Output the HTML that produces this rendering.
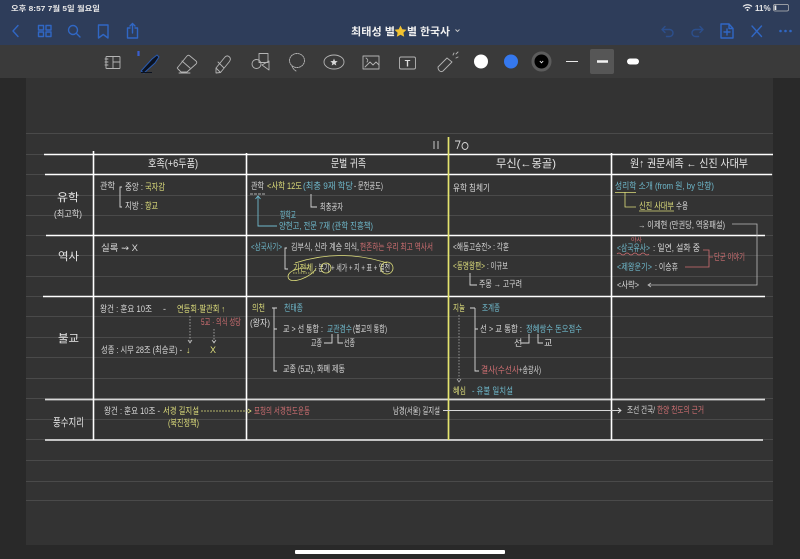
<!DOCTYPE html>
<html lang="ko"><head><meta charset="utf-8"><title>최태성 별 한국사</title>
<style>
html,body{margin:0;padding:0;background:#292929;width:800px;height:559px;overflow:hidden}
svg{display:block}
text{font-family:"Liberation Sans","Noto Sans CJK KR",sans-serif}
.t{filter:blur(.3px)}
.t text{font-size:9px}
.w{fill:#d8d8d8}.y{fill:#dede7c}.c{fill:#6fb9cc}.r{fill:#cf6f72}
.h{font-size:11px!important;fill:#e8e8e8}
.ln{stroke:#fff;stroke-width:1.6}
.rule{stroke:#4a4a4a;stroke-width:1}
.b{fill:none;stroke:#d8d8d8;stroke-width:.9}
.ic{fill:none;stroke:#3067c4;stroke-width:1.4;stroke-linecap:round;stroke-linejoin:round}
.id{fill:none;stroke:#2c4f8c;stroke-width:1.4;stroke-linecap:round;stroke-linejoin:round}
.tb{fill:none;stroke:#b4b4b4;stroke-width:.9;stroke-linejoin:round;stroke-linecap:round}
</style></head><body>
<svg width="800" height="559" viewBox="0 0 800 559" xmlns="http://www.w3.org/2000/svg">
<rect width="800" height="559" fill="#292929"/>
<!-- page -->
<rect x="26" y="78" width="747" height="467" fill="#333333"/>
<g class="rule">
<path d="M26 133.500H773M26 174.500H773M26 195.500H773M26 215.500H773M26 235.500H773M26 255.500H773M26 276.500H773M26 296.500H773M26 316.500H773M26 337.500H773M26 357.500H773M26 378.500H773M26 398.500H773M26 419.500H773M26 439.500H773M26 460.500H773M26 481.500H773M26 500.500H773M26 154.500H773"/>
</g>
<!-- nav bar -->
<rect width="800" height="45" fill="#2e3d5a"/>
<rect y="45" width="800" height="33" fill="#3a3a3a"/>
<text x="11" y="11" font-size="7.500" font-weight="700" fill="#e8e8e8" textLength="89" lengthAdjust="spacingAndGlyphs">오후 8:57  7월 5일 월요일</text>
<text x="755" y="11" font-size="8" font-weight="700" fill="#e8e8e8">11%</text>
<path d="M743 6.500q4.500-3.500 9 0M744.800 8.300q2.700-2 5.400 0" fill="none" stroke="#eee" stroke-width="1.100"/><circle cx="747.500" cy="10" r="1" fill="#eee"/>
<rect x="773.500" y="4.500" width="15" height="6.500" rx="1.500" fill="none" stroke="#bbb" stroke-width=".7"/><rect x="774.500" y="5.500" width="1.800" height="4.500" fill="#eee"/>
<!-- nav left icons -->
<path class="ic" d="M18 25.500l-5 5.500 5 5.500" stroke-width="1.800"/>
<g class="ic"><rect x="38.500" y="25.500" width="5" height="4.500"/><rect x="46" y="25.500" width="5" height="4.500"/><rect x="38.500" y="32" width="5" height="4.500"/><rect x="46" y="32" width="5" height="4.500"/></g>
<circle class="ic" cx="73" cy="30" r="4.500"/><path class="ic" d="M76.500 33.500l3.500 3.500"/>
<path class="ic" d="M98.500 25h9.500v13l-4.750-3.500-4.750 3.500z"/>
<path class="ic" d="M130 28h-2.500v10h10v-10h-2.500M132.500 33v-9.500M130 26l2.500-2.500 2.500 2.500"/>
<!-- title -->
<text x="351" y="35" font-size="10.500" font-weight="700" fill="#f0f0f0" textLength="44" lengthAdjust="spacingAndGlyphs">최태성 별</text>
<polygon points="400.500,25.500 402.300,29.300 406.500,29.800 403.400,32.700 404.200,36.800 400.500,34.800 396.800,36.800 397.600,32.700 394.500,29.800 398.700,29.300" fill="#f2c230"/>
<text x="407" y="35" font-size="10.500" font-weight="700" fill="#f0f0f0" textLength="43" lengthAdjust="spacingAndGlyphs">별 한국사</text>
<path d="M455.500 29.500l2 2 2-2" fill="none" stroke="#ccc" stroke-width=".9"/>
<!-- nav right icons -->
<path class="id" d="M665 26.500l-3 3 3 3M662 29.500h7.500a3.300 3.300 0 0 1 0 7h-3"/>
<path class="id" d="M700 26.500l3 3-3 3M703 29.500h-7.500a3.300 3.300 0 0 0 0 7h3"/>
<path class="ic" d="M721 24h8l4 4.500v9.500h-12zM729 24v4.500h4M727 29v6M724 32h6"/>
<path class="ic" d="M752 26l9.500 10.500M761.500 26L752 36.500" stroke-width="1.600"/>
<g fill="#3067c4"><circle cx="780.500" cy="31" r="1.300"/><circle cx="785.500" cy="31" r="1.300"/><circle cx="790.500" cy="31" r="1.300"/></g>
<!-- tool icons -->
<g class="tb">
<rect x="106" y="56.500" width="14" height="12" rx=".8"/><path d="M105 59h3M105 62h3M105 65h3M113 56.500v12M113 62h7"/>
<path d="M178 67l9-11c1-1 2-1 3 0l6 5c1 1 1 2 0 3l-9 8h-6l-3-3c-1-1-1-1 0-2zM182 61l8 7M179 73h11"/>
<path d="M216 68l9-11c1.500-1.500 3-1.500 4.500 0s1 3 0 4.500l-9 11-4.500 .5zM216 68l4.500 4.500M218 62l6 6"/>
<rect x="259" y="53.500" width="9" height="9"/><circle cx="256.500" cy="64" r="4.500"/><path d="M262 65l7 5v-9z"/>
<ellipse cx="297" cy="60.500" rx="7.500" ry="7" stroke-dasharray="1.500 1"/><path d="M292 66q1 3 4 5" stroke-dasharray="1.500 1"/>
<ellipse cx="334" cy="62" rx="10" ry="7"/>
<rect x="363" y="56" width="16" height="13"/><path d="M365 67l5-5 3 3 3-3 3 3M366 58q3 2 1 4"/>
<rect x="399.500" y="57" width="16" height="12" rx="1.500"/>
<path d="M438 67l9-9 5 4-9 9c-2 1.500-5 0-5-4z"/><path d="M453 55l1-2M456 58l2-1M456 54l2-2"/>
</g>
<polygon points="334,58.500 335,61 337.700,61.200 335.600,63 336.300,65.500 334,64.100 331.700,65.500 332.400,63 330.300,61.200 333,61" fill="#d8d8d8"/>
<text x="407.500" y="66.500" font-size="9" font-weight="700" fill="#ddd" text-anchor="middle">T</text>
<path d="M141 71l11-12 5-4 2 2-4 6-11 10z" fill="#0b1220" stroke="#2a5bb0" stroke-width="1"/>
<path d="M141 72.500h11" stroke="#0b1220" stroke-width="1"/>
<path d="M138.500 51v5" stroke="#3a5fcf" stroke-width="2.200"/>
<!-- colours -->
<circle cx="481" cy="61.500" r="7" fill="#fff"/>
<circle cx="511" cy="61.500" r="7" fill="#3578ee"/>
<circle cx="541.500" cy="61.500" r="8.500" fill="#000" stroke="#5c5c5c" stroke-width="3"/>
<path d="M539.800 61l1.700 1.800 1.700-1.800" fill="none" stroke="#eee" stroke-width=".9"/>
<path d="M566 61.500h12" stroke="#e8e8e8" stroke-width="1"/>
<rect x="590" y="49" width="24" height="25" rx="2" fill="#565656"/>
<path d="M597 61.500h11" stroke="#f2f2f2" stroke-width="2.500"/>
<rect x="627" y="58.500" width="12" height="6" rx="3" fill="#fff"/>
<!-- home bar -->
<rect x="295" y="550" width="210" height="4" rx="1" fill="#fff"/>

<!-- table -->
<path class="ln" d="M44 154.500H773M45 174.500H772M46 235.500H765M43 296.500H765"/>
<path d="M45 399.500H765M45 440H763" stroke="#d8d8d8" stroke-width="1.700"/>
<path class="ln" d="M93.500 151V440M246.500 153V440M611.500 153V440"/>
<path d="M448.500 137V440" stroke="#e4e46e" stroke-width="1.700"/>

<g class="t">
<path d="M434 141v8M438 141v8" stroke="#d8d8d8" stroke-width=".9"/>
<path d="M455 141h5l-3 8" fill="none" stroke="#d8d8d8" stroke-width=".9"/>
<ellipse cx="465" cy="146" rx="3" ry="3.500" fill="none" stroke="#d8d8d8" stroke-width=".9"/>
<!-- headers -->
<text class="h" x="148" y="167" textLength="50" lengthAdjust="spacingAndGlyphs">호족(+6두품)</text>
<text class="h" x="331" y="167" textLength="35" lengthAdjust="spacingAndGlyphs">문벌 귀족</text>
<text class="h" x="496" y="167" textLength="60" lengthAdjust="spacingAndGlyphs">무신(←몽골)</text>
<text class="h" x="630" y="167" textLength="118" lengthAdjust="spacingAndGlyphs">원↑ 권문세족 ← 신진 사대부</text>
<!-- row labels -->
<text class="h" x="57" y="201" textLength="22" lengthAdjust="spacingAndGlyphs">유학</text>
<text class="w" x="54" y="217" textLength="28" lengthAdjust="spacingAndGlyphs">(최고학)</text>
<text class="h" x="58" y="260" textLength="21" lengthAdjust="spacingAndGlyphs">역사</text>
<text class="h" x="58" y="342" textLength="21" lengthAdjust="spacingAndGlyphs">불교</text>
<text class="h" x="53" y="426" textLength="31" lengthAdjust="spacingAndGlyphs">풍수지리</text>

<!-- col1 -->
<text class="w" x="100" y="189" textLength="15" lengthAdjust="spacingAndGlyphs">관학</text>
<path class="b" d="M122 187h-2v20h2"/>
<text class="w" x="125" y="190" textLength="18" lengthAdjust="spacingAndGlyphs">중앙 :</text><text class="y" x="145" y="190" textLength="20" lengthAdjust="spacingAndGlyphs">국자감</text>
<text class="w" x="125" y="209" textLength="18" lengthAdjust="spacingAndGlyphs">지방 :</text><text class="y" x="145" y="209" textLength="13" lengthAdjust="spacingAndGlyphs">향교</text>
<text class="w" x="101" y="251" textLength="37" lengthAdjust="spacingAndGlyphs">실록 ⇝ X</text>
<text class="w" x="100" y="312" textLength="52" lengthAdjust="spacingAndGlyphs">왕건 : 훈요 10조</text>
<text class="w" x="163" y="312">-</text>
<text class="y" x="177" y="312" textLength="48" lengthAdjust="spacingAndGlyphs">연등회·팔관회 ↑</text>
<text class="r" x="201" y="325" textLength="40" lengthAdjust="spacingAndGlyphs">5교 · 의식 성당</text>
<path d="M190 316v26M214 329v13" stroke="#ccc" stroke-width=".7" stroke-dasharray="1.500 1.500"/>
<path d="M188 340l2 3 2-3M212 340l2 3 2-3" fill="none" stroke="#ccc" stroke-width=".7"/>
<text class="w" x="101" y="353" textLength="81" lengthAdjust="spacingAndGlyphs">성종 : 시무 28조 (최승로) -</text>
<text class="y" x="186" y="353">↓</text><text class="y" x="210" y="353">X</text>
<text class="w" x="104" y="414" textLength="56" lengthAdjust="spacingAndGlyphs">왕건 : 훈요 10조 -</text>
<text class="y" x="163" y="414" textLength="36" lengthAdjust="spacingAndGlyphs">서경 길지설</text>
<text class="y" x="168" y="426" textLength="31" lengthAdjust="spacingAndGlyphs">(북진정책)</text>
<path d="M201 411h47" stroke="#dede7c" stroke-width=".8" stroke-dasharray="2 1"/>
<path d="M248 409l3 2-3 2" fill="none" stroke="#dede7c" stroke-width=".8"/>

<!-- col2 row1 -->
<text class="w" x="251" y="189" textLength="13" lengthAdjust="spacingAndGlyphs">관학</text>
<path d="M250 194h15" stroke="#ddd" stroke-width=".8" stroke-dasharray="3 1"/>
<text class="y" x="267" y="189" textLength="35" lengthAdjust="spacingAndGlyphs">&lt;사학 12도</text>
<text class="c" x="303" y="189" textLength="50" lengthAdjust="spacingAndGlyphs">(최충 9재 학당</text>
<text class="w" x="354" y="189" textLength="29" lengthAdjust="spacingAndGlyphs">- 문헌공도)</text>
<path class="b" d="M311 194v13h6"/>
<text class="w" x="320" y="210" textLength="23" lengthAdjust="spacingAndGlyphs">최충공자</text>
<path d="M258 196v30h19M255.500 199l2.500-3 2.500 3" fill="none" stroke="#6fb9cc" stroke-width=".9"/>
<text class="c" x="280" y="218" textLength="16" lengthAdjust="spacingAndGlyphs">향학교</text>
<text class="c" x="279" y="229" textLength="94" lengthAdjust="spacingAndGlyphs">양현고, 전문 7재 (관학 진흥책)</text>
<!-- col2 row2 -->
<text class="c" x="251" y="250" textLength="31" lengthAdjust="spacingAndGlyphs">&lt;삼국사기&gt;</text>
<path class="b" d="M287 248h-2v21h3"/>
<text class="w" x="291" y="250" textLength="68" lengthAdjust="spacingAndGlyphs">김부식, 신라 계승 의식,</text>
<text class="r" x="360" y="250" textLength="73" lengthAdjust="spacingAndGlyphs">현존하는 우리 최고 역사서</text>
<text class="y" x="293" y="271" textLength="20" lengthAdjust="spacingAndGlyphs">기전체</text>
<path d="M293 273h21" stroke="#dede7c" stroke-width=".7" stroke-dasharray="1.500 1"/>
<text class="w" x="315" y="271" textLength="75" lengthAdjust="spacingAndGlyphs">: 본기 + 세가 + 지 + 표 + 열전</text>
<path d="M295 263q46-15 92 0M316 268c-2 8-28 19-28 8 1-6 12-8 20-8" fill="none" stroke="#dede7c" stroke-width=".8"/>
<circle cx="326" cy="268" r="5" fill="none" stroke="#dede7c" stroke-width=".8"/>
<circle cx="387" cy="268" r="6" fill="none" stroke="#dede7c" stroke-width=".8"/>
<!-- col2 row3 -->
<text class="y" x="252" y="311" textLength="13" lengthAdjust="spacingAndGlyphs">의천</text>
<text class="w" x="250" y="326" textLength="20" lengthAdjust="spacingAndGlyphs">(왕자)</text>
<path class="b" d="M272 308h5M274 308v63h3M274 329h3"/>
<text class="c" x="284" y="311" textLength="19" lengthAdjust="spacingAndGlyphs">천태종</text>
<text class="w" x="283" y="332" textLength="40" lengthAdjust="spacingAndGlyphs">교 &gt; 선 통합 :</text>
<text class="c" x="327" y="332" textLength="25" lengthAdjust="spacingAndGlyphs">교관겸수</text>
<text class="w" x="353" y="332" textLength="34" lengthAdjust="spacingAndGlyphs">(불교의 통합)</text>
<path class="b" d="M332 334v9h-8M338 334v9h5"/>
<text class="w" x="311" y="346" textLength="11" lengthAdjust="spacingAndGlyphs">교종</text>
<text class="w" x="344" y="346" textLength="11" lengthAdjust="spacingAndGlyphs">선종</text>
<text class="w" x="283" y="372" textLength="62" lengthAdjust="spacingAndGlyphs">교종 (5교), 화폐 제동</text>
<text class="r" x="254" y="414" textLength="56" lengthAdjust="spacingAndGlyphs">묘청의 서경천도운동</text>
<text class="w" x="393" y="414" textLength="47" lengthAdjust="spacingAndGlyphs">남경(서울) 길지설</text>
<path class="b" d="M443 410.500H621M618 408l3 2.500-3 2.500"/>

<!-- col3 -->
<text class="w" x="453" y="191" textLength="37" lengthAdjust="spacingAndGlyphs">유학 침체기</text>
<text class="w" x="453" y="250" textLength="56" lengthAdjust="spacingAndGlyphs">&lt;해동고승전&gt; : 각훈</text>
<text class="y" x="453" y="269" textLength="32" lengthAdjust="spacingAndGlyphs">&lt;동명왕편&gt;</text>
<text class="w" x="487" y="269" textLength="21" lengthAdjust="spacingAndGlyphs">: 이규보</text>
<path class="b" d="M470 273v12h7"/>
<text class="w" x="479" y="287" textLength="43" lengthAdjust="spacingAndGlyphs">주몽 → 고구려</text>
<text class="y" x="453" y="311" textLength="12" lengthAdjust="spacingAndGlyphs">지눌</text>
<path class="b" d="M470 308h5M475 308v63h4M475 329h3"/>
<text class="c" x="482" y="311" textLength="18" lengthAdjust="spacingAndGlyphs">조계종</text>
<text class="w" x="480" y="332" textLength="42" lengthAdjust="spacingAndGlyphs">선 &gt; 교 통합 :</text>
<text class="c" x="526" y="332" textLength="56" lengthAdjust="spacingAndGlyphs">정혜쌍수 돈오점수</text>
<path class="b" d="M529 334v9h-8M538 334v9h5"/>
<text class="w" x="514" y="346">선</text><text class="w" x="544" y="346">교</text>
<text class="r" x="481" y="373" textLength="38" lengthAdjust="spacingAndGlyphs">결사(수선사</text>
<text class="w" x="519" y="373" textLength="22" lengthAdjust="spacingAndGlyphs">+송광사)</text>
<path d="M459 315v64" stroke="#bbb" stroke-width=".7" stroke-dasharray="1.500 1.500"/>
<path d="M457 379l2 3 2-3" fill="none" stroke="#bbb" stroke-width=".7"/>
<text class="y" x="453" y="394" textLength="13" lengthAdjust="spacingAndGlyphs">혜심</text>
<text class="c" x="472" y="394" textLength="41" lengthAdjust="spacingAndGlyphs">- 유불 일치설</text>

<!-- col4 -->
<text class="c" x="615" y="189" textLength="99" lengthAdjust="spacingAndGlyphs">성리학 소개 (from 원, by 안향)</text>
<path d="M615 192.500h21" stroke="#dede7c" stroke-width=".8"/>
<path d="M625 192v15h11" fill="none" stroke="#dede7c" stroke-width=".8"/>
<text class="y" x="639" y="209" textLength="35" lengthAdjust="spacingAndGlyphs">신진 사대부</text>
<path d="M639 211h35" stroke="#dede7c" stroke-width=".8"/>
<text class="w" x="676" y="209" textLength="12" lengthAdjust="spacingAndGlyphs">수용</text>
<text class="w" x="638" y="228" textLength="87" lengthAdjust="spacingAndGlyphs">→ 이제현 (만권당, 역옹패설)</text>
<path d="M732 224h25v61H648M651 283l-3 2 3 2" fill="none" stroke="#bbb" stroke-width=".8"/>
<text class="c" x="617" y="251" textLength="33" lengthAdjust="spacingAndGlyphs">&lt;삼국유사&gt;</text>
<path d="M617 254q2-2 4 0t4 0 4 0 4 0 4 0 4 0 4 0 4 0" fill="none" stroke="#cf6f72" stroke-width=".8"/>
<text class="r" x="631" y="242" style="font-size:6px">야사</text>
<text class="w" x="653" y="251" textLength="47" lengthAdjust="spacingAndGlyphs">: 일연, 설화 중</text>
<text class="c" x="617" y="270" textLength="35" lengthAdjust="spacingAndGlyphs">&lt;제왕운기&gt;</text>
<text class="w" x="655" y="270" textLength="23" lengthAdjust="spacingAndGlyphs">: 이승휴</text>
<path d="M703 250h6v17h-24M709 257h4" fill="none" stroke="#cf6f72" stroke-width=".8"/>
<text class="r" x="714" y="260" textLength="31" lengthAdjust="spacingAndGlyphs">단군 이야기</text>
<text class="w" x="617" y="288" textLength="22" lengthAdjust="spacingAndGlyphs">&lt;사략&gt;</text>
<text class="w" x="627" y="413" textLength="28" lengthAdjust="spacingAndGlyphs">조선 건국/</text>
<text class="r" x="657" y="413" textLength="47" lengthAdjust="spacingAndGlyphs">한양 천도의 근거</text>
</g>
</svg>
</body></html>
